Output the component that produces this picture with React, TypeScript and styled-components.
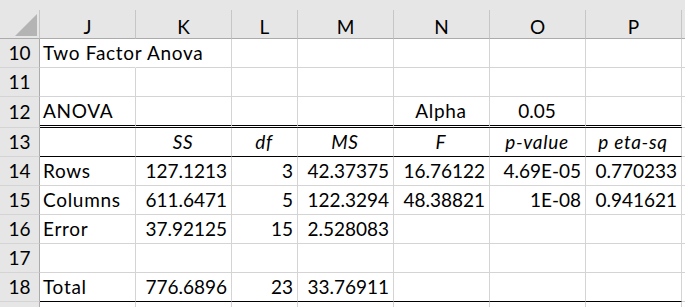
import { Fragment } from 'react';
import styled, { createGlobalStyle, css } from 'styled-components';

const GlobalStyle = createGlobalStyle`
  html,
  body {
    background: #fff;
    margin: 0;
    padding: 0;
  }
`;

type Align = 'left' | 'center' | 'right';
type Edge = 'grid' | 'double' | 'solid';

const justify = { left: 'flex-start', center: 'center', right: 'flex-end' };

const StyledSheet = styled.div`
  color: #000;
  display: grid;
  font-family: Lato, 'Liberation Sans', sans-serif;
  font-size: 19px;
  grid-template-columns: 40px 96px 96px 66px 96px 96px 96px 96px 1fr;
  grid-template-rows: 10px 29px 29px 29px 31px 29px 29px 29px 29px 29px 29px 29px;
  height: 307px;
  overflow: hidden;
  width: 685px;
`;

const StyledTopStrip = styled.div`
  background: #e6e6e6;
  grid-column: 1 / -1;
`;

const StyledCorner = styled.div`
  align-items: flex-end;
  background: #e6e6e6;
  border-bottom: 1px solid #ababab;
  border-right: 1px solid #c6c6c6;
  box-sizing: border-box;
  display: flex;
  justify-content: flex-end;
  padding: 0 2px 2px 0;
`;

const StyledColHead = styled.div<{ $last?: boolean }>`
  align-items: flex-start;
  background: #e6e6e6;
  border-bottom: 1px solid #ababab;
  border-right: ${({ $last }) => ($last ? 'none' : '1px solid #c6c6c6')};
  box-sizing: border-box;
  display: flex;
  justify-content: center;
  line-height: 28px;
  padding-top: 3px;
`;

const StyledRowHead = styled.div`
  align-items: center;
  background: #e6e6e6;
  border-bottom: 1px solid #d4d4d4;
  border-right: 1px solid #ababab;
  box-sizing: border-box;
  display: flex;
  justify-content: center;
  line-height: 28px;
`;

const edgeStyles = {
  grid: css`
    border-bottom: 1px solid #d4d4d4;
  `,
  double: css`
    border-bottom: 3px double #000;
  `,
  solid: css`
    border-bottom: 1px solid #000;
  `,
};

const StyledCell = styled.div<{
  $align: Align;
  $italic?: boolean;
  $edge: Edge;
  $spill?: boolean;
  $label?: boolean;
}>`
  align-items: flex-start;
  border-right: 1px solid ${({ $spill }) => ($spill ? 'transparent' : '#d4d4d4')};
  box-sizing: border-box;
  display: flex;
  font-style: ${({ $italic }) => ($italic ? 'italic' : 'normal')};
  justify-content: ${({ $align }) => justify[$align]};
  letter-spacing: ${({ $label }) => ($label ? '0.7px' : 'normal')};
  line-height: 28px;
  padding: 0 4px 0 3px;
  white-space: nowrap;
  ${({ $edge }) => edgeStyles[$edge]}
`;

const StyledFiller = styled.div`
  border-bottom: 1px solid #d4d4d4;
  box-sizing: border-box;
`;

type Row = {
  n: number;
  cells: string[];
  edge?: Edge;
  italic?: boolean;
  align?: Align[];
  cut?: boolean;
};

const NUM: Align[] = ['left', 'right', 'right', 'right', 'right', 'right', 'right'];
const MID: Align[] = ['left', 'center', 'center', 'center', 'center', 'center', 'center'];

const rows: Row[] = [
  { n: 10, cells: ['Two Factor Anova', '', '', '', '', '', ''] },
  { n: 11, cells: ['', '', '', '', '', '', ''] },
  { n: 12, cells: ['ANOVA', '', '', '', 'Alpha', '0.05', ''], edge: 'double', align: MID },
  { n: 13, cells: ['', 'SS', 'df', 'MS', 'F', 'p-value', 'p eta-sq'], edge: 'solid', italic: true, align: MID },
  { n: 14, cells: ['Rows', '127.1213', '3', '42.37375', '16.76122', '4.69E-05', '0.770233'] },
  { n: 15, cells: ['Columns', '611.6471', '5', '122.3294', '48.38821', '1E-08', '0.941621'] },
  { n: 16, cells: ['Error', '37.92125', '15', '2.528083', '', '', ''] },
  { n: 17, cells: ['', '', '', '', '', '', ''] },
  { n: 18, cells: ['Total', '776.6896', '23', '33.76911', '', '', ''], edge: 'solid' },
  // only the top sliver of row 19 is on screen
  { n: 19, cells: ['', '', '', '', '', '', ''], cut: true },
];

const columns = ['J', 'K', 'L', 'M', 'N', 'O', 'P'];

const isLabel = (text: string) => /[A-Za-z]/.test(text) && !/^[\d.]+E-\d+$/.test(text);

const App = () => (
  <>
    <GlobalStyle />
    <StyledSheet>
      <StyledTopStrip />
      <StyledCorner>
        <svg width="22" height="22" viewBox="0 0 22 22">
          <polygon points="22,0 22,22 0,22" fill="#b4b4b4" />
        </svg>
      </StyledCorner>
      {columns.map((c) => (
        <StyledColHead key={c}>{c}</StyledColHead>
      ))}
      <StyledColHead $last />
      {rows.map((row) => (
        <Fragment key={row.n}>
          <StyledRowHead>{row.cut ? '' : row.n}</StyledRowHead>
          {row.cells.map((text, i) => (
            <StyledCell
              key={i}
              $align={(row.align ?? NUM)[i]}
              $italic={row.italic}
              $edge={row.edge ?? 'grid'}
              $spill={row.n === 10 && i === 0}
              $label={isLabel(text)}
            >
              {text}
            </StyledCell>
          ))}
          <StyledFiller />
        </Fragment>
      ))}
    </StyledSheet>
  </>
);

export default App;
